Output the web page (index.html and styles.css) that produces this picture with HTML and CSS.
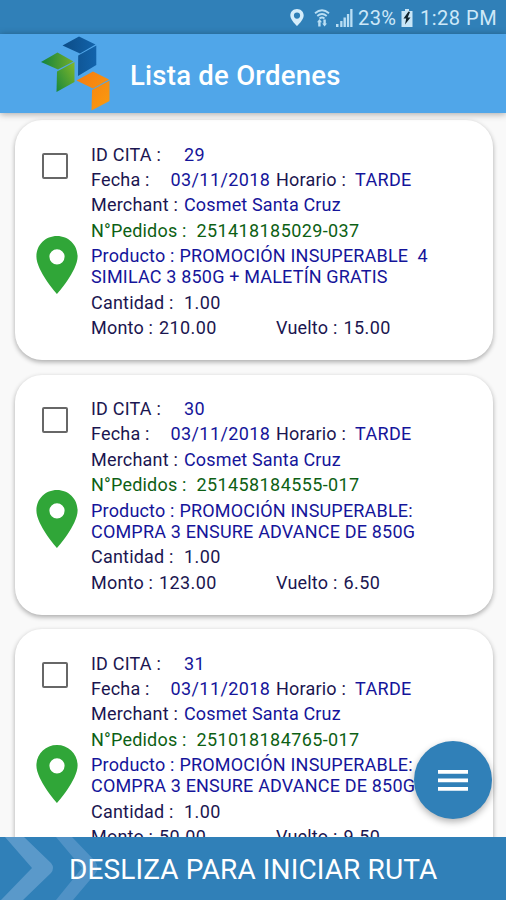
FILE: index.html
```html
<!DOCTYPE html>
<html lang="es">
<head>
<meta charset="utf-8">
<title>Lista de Ordenes</title>
<link rel="stylesheet" href="styles.css">
</head>
<body>
<svg class="defs" width="0" height="0">
  <defs>
    <symbol id="pin" viewBox="0 0 42 58"><path fill="#30a638" fill-rule="evenodd" d="M21 0C9.400 0 .4 9 .4 20.500C.4 35 21 58 21 58S41.600 35 41.600 20.500C41.600 9 32.600 0 21 0ZM21 13.200a7.600 7.600 0 1 1 0 15.200a7.600 7.600 0 1 1 0-15.200Z"/></symbol>
  </defs>
</svg>
<div class="app">
  <div class="status">
    <svg class="s-pin" width="14" height="17" viewBox="0 0 14 17"><path fill="#d5edfb" fill-rule="evenodd" d="M7 0C3.100 0 .3 2.900.3 6.500C.3 11 7 17 7 17S13.700 11 13.700 6.500C13.700 2.900 10.900 0 7 0ZM7 3.500a3.100 3.100 0 1 1 0 6.200a3.100 3.100 0 1 1 0-6.200Z"/></svg>
    <svg class="s-wifi" width="16" height="18" viewBox="0 0 16 18"><g fill="none" stroke="#b9def4" stroke-width="1.800"><path d="M1 4.200Q8-1.800 15 4.200M3.300 7Q8 3 12.700 7M5.500 9.500Q8 7.500 10.500 9.500"/></g><path fill="#b9def4" d="M5.500 10 8 13.200H6.600V17.500H4.200V13.200H3ZM9.400 10.500h2.400v4H13L10.600 17.500 8.200 14.500h1.200Z"/></svg>
    <svg class="s-signal" width="17" height="18" viewBox="0 0 17 18"><path fill="#b9def4" d="M0 15h2.500v3H0ZM4.200 12h2.300v6H4.200ZM7.500 8.500h2.400v9.500H7.500ZM10.900 5h2.300v13h-2.300ZM14.200 0h2.300v18h-2.300Z"/></svg>
    <span class="pct">23%</span>
    <svg class="s-bat" width="12" height="18" viewBox="0 0 12 18"><path fill="#c9e6f7" d="M4 0h4v2h3.500v16H.5V2H4Z"/><path fill="#10242f" d="M7.500 2.500 2.500 9.500h2.700L4 15.500l5.500-7H6.700L9 3Z"/></svg>
    <span class="clock">1:28 PM</span>
  </div>
  <header class="bar">
    <svg class="logo" width="70" height="76" viewBox="0 0 70 76">
      <defs>
        <linearGradient id="g1" x1="0" x2="1"><stop offset="0" stop-color="#12833e"/><stop offset="1" stop-color="#72ad2c"/></linearGradient>
        <linearGradient id="g2" x1="0" y1="1" x2="1" y2="0"><stop offset="0" stop-color="#18873c"/><stop offset="1" stop-color="#83b829"/></linearGradient>
        <linearGradient id="b1" x1="0" x2="1"><stop offset="0" stop-color="#0c4c86"/><stop offset="1" stop-color="#1263ab"/></linearGradient>
        <linearGradient id="o1" x1="0" x2="1" y2="1"><stop offset="0" stop-color="#f47c12"/><stop offset="1" stop-color="#fa9b0e"/></linearGradient>
      </defs>
      <path fill="url(#b1)" d="M22.500 11.500 39 2.500 55.500 10.500 40 19.500ZM38.200 21.500 56.300 11.500V31L38 42Z"/>
      <path fill="url(#g1)" d="M1 28 17.500 18.500 33.500 27.500 18 35.500Z"/>
      <path fill="url(#g2)" d="M17 37.500 34.500 28V48L16.500 58Z"/>
      <path fill="url(#o1)" d="M36.500 46.500 53 37.500 69 45.500 53 54.500ZM52 56 69.500 46.500V67L51.500 76.500Z"/>
    </svg>
    <h1 class="title">Lista de Ordenes</h1>
  </header>
  <main class="list">
    <article class="card">
      <div class="side"><span class="check"></span><svg class="pin" width="42" height="58"><use href="#pin"/></svg></div>
      <div class="info">
        <div class="row"><span class="w-id">ID CITA :</span><b>29</b></div>
        <div class="row"><span class="w-fecha">Fecha :</span><b class="w-date">03/11/2018</b><span class="w-hor">Horario :</span><b>TARDE</b></div>
        <div class="row"><span class="w-id">Merchant :</span><b class="name">Cosmet Santa Cruz</b></div>
        <div class="row green"><span class="w-ped">N°Pedidos :</span><span class="num">251418185029-037</span></div>
        <div class="product"><span class="w-prod">Producto :</span>PROMOCIÓN INSUPERABLE &nbsp;4<br>SIMILAC 3 850G + MALETÍN GRATIS</div>
        <div class="row"><span class="w-id">Cantidad :</span><span class="num">1.00</span></div>
        <div class="row"><span class="w-monto">Monto :</span><span class="w-amt">210.00</span><span class="w-vuelto">Vuelto :</span><span class="num">15.00</span></div>
      </div>
    </article>
    <article class="card">
      <div class="side"><span class="check"></span><svg class="pin" width="42" height="58"><use href="#pin"/></svg></div>
      <div class="info">
        <div class="row"><span class="w-id">ID CITA :</span><b>30</b></div>
        <div class="row"><span class="w-fecha">Fecha :</span><b class="w-date">03/11/2018</b><span class="w-hor">Horario :</span><b>TARDE</b></div>
        <div class="row"><span class="w-id">Merchant :</span><b class="name">Cosmet Santa Cruz</b></div>
        <div class="row green"><span class="w-ped">N°Pedidos :</span><span class="num">251458184555-017</span></div>
        <div class="product"><span class="w-prod">Producto :</span>PROMOCIÓN INSUPERABLE:<br>COMPRA 3 ENSURE ADVANCE DE 850G</div>
        <div class="row"><span class="w-id">Cantidad :</span><span class="num">1.00</span></div>
        <div class="row"><span class="w-monto">Monto :</span><span class="w-amt">123.00</span><span class="w-vuelto">Vuelto :</span><span class="num">6.50</span></div>
      </div>
    </article>
    <article class="card">
      <div class="side"><span class="check"></span><svg class="pin" width="42" height="58"><use href="#pin"/></svg></div>
      <div class="info">
        <div class="row"><span class="w-id">ID CITA :</span><b>31</b></div>
        <div class="row"><span class="w-fecha">Fecha :</span><b class="w-date">03/11/2018</b><span class="w-hor">Horario :</span><b>TARDE</b></div>
        <div class="row"><span class="w-id">Merchant :</span><b class="name">Cosmet Santa Cruz</b></div>
        <div class="row green"><span class="w-ped">N°Pedidos :</span><span class="num">251018184765-017</span></div>
        <div class="product"><span class="w-prod">Producto :</span>PROMOCIÓN INSUPERABLE:<br>COMPRA 3 ENSURE ADVANCE DE 850G</div>
        <div class="row"><span class="w-id">Cantidad :</span><span class="num">1.00</span></div>
        <div class="row"><span class="w-monto">Monto :</span><span class="w-amt">50.00</span><span class="w-vuelto">Vuelto :</span><span class="num">9.50</span></div>
      </div>
    </article>
  </main>
  <button class="fab" aria-label="Menú"><svg width="30" height="21" viewBox="0 0 30 21"><path fill="#fff" d="M0 0h30v3.700H0ZM0 8.500h30v3.700H0ZM0 17h30v3.700H0Z"/></svg></button>
  <footer class="slide">
    <svg class="chev" width="98" height="63" viewBox="0 0 98 63"><path fill="#5a99ca" d="M5 0H24L51 26Q55 31 51 36L23 63H1L32 31Z"/><path fill="#5092c6" d="M56 0H72L95 24Q100 31 95 37L73 63H56L82 31Z"/></svg>
    <span class="slide-text">DESLIZA PARA INICIAR RUTA</span>
  </footer>
</div>
</body>
</html>
```
FILE: styles.css
```css
* { box-sizing: border-box; }
body { margin: 0; font-family: Roboto, "Liberation Sans", sans-serif; }
.defs { position: absolute; }
.app { position: relative; width: 506px; height: 900px; overflow: hidden; display: flex; flex-direction: column; background: #f9f9f9; }
.status { flex: none; height: 34px; background: #3080b8; display: flex; align-items: center; padding: 1px 0 0 290px; color: #cde8f8; font-size: 20px; white-space: nowrap; }
.s-wifi { margin-left: 10px; }
.s-signal { margin-left: 6px; }
.pct { margin-left: 5px; width: 39px; letter-spacing: .4px; }
.s-bat { margin-left: 4px; }
.clock { margin-left: 7px; letter-spacing: .5px; }
.bar { flex: none; height: 79px; background: #50a6e9; display: flex; align-items: center; padding-left: 40px; box-shadow: 0 1px 7px rgba(0,0,0,.35); z-index: 1; }
.logo { overflow: visible; margin-top: -3px; }
.title { margin: 4px 0 0 20px; font-size: 27.500px; letter-spacing: .25px; line-height: 32px; font-weight: 500; color: #fff; white-space: nowrap; }
.list { flex: 1; min-height: 0; overflow: hidden; padding: 7px 13px 0 15px; display: flex; flex-direction: column; gap: 14.500px; }
.card { flex: none; height: 240px; border-radius: 27px; background: #fff; box-shadow: 0 2px 5px rgba(0,0,0,.32); display: flex; padding-top: 23.600px; }
.side { width: 76px; padding: 9px 0 0 21px; display: flex; flex-direction: column; }
.check { width: 26px; height: 26px; margin-left: 6px; border: 2px solid #676767; border-radius: 2px; }
.pin { margin-top: 57px; }
.info { display: flex; flex-direction: column; gap: 4.200px; font-size: 18px; line-height: 21.200px; letter-spacing: .2px; color: #1b1650; white-space: nowrap; }
.row { display: flex; height: 21.200px; }
.row span { flex: none; }
.row b { font-weight: 400; color: #15159a; letter-spacing: .35px; }
.row .name { letter-spacing: .15px; }
.num, .w-amt { letter-spacing: .4px; }
.w-id { width: 93px; }
.w-fecha { width: 79.500px; }
.row .w-date { width: 105.500px; letter-spacing: .4px; }
.w-hor { width: 79px; }
.w-ped { width: 105.500px; }
.w-monto { width: 68px; }
.w-amt { width: 117px; }
.w-vuelto { width: 67.500px; }
.green { color: #0d5f14; }
.product { color: #15159a; letter-spacing: .18px; }
.w-prod { display: inline-block; width: 88.500px; }
.fab { position: absolute; left: 414px; top: 741px; width: 78px; height: 78px; border: 0; border-radius: 50%; background: #3080b8; box-shadow: 0 3px 7px rgba(0,0,0,.3); display: flex; align-items: center; justify-content: center; padding: 0; }
.slide { flex: none; height: 63px; background: #3080b8; display: grid; align-items: center; overflow: hidden; z-index: 1; }
.chev, .slide-text { grid-area: 1 / 1; }
.slide-text { padding: 2px 0 0 69px; font-size: 28px; letter-spacing: .12px; line-height: 34px; color: #fff; white-space: nowrap; }
```
